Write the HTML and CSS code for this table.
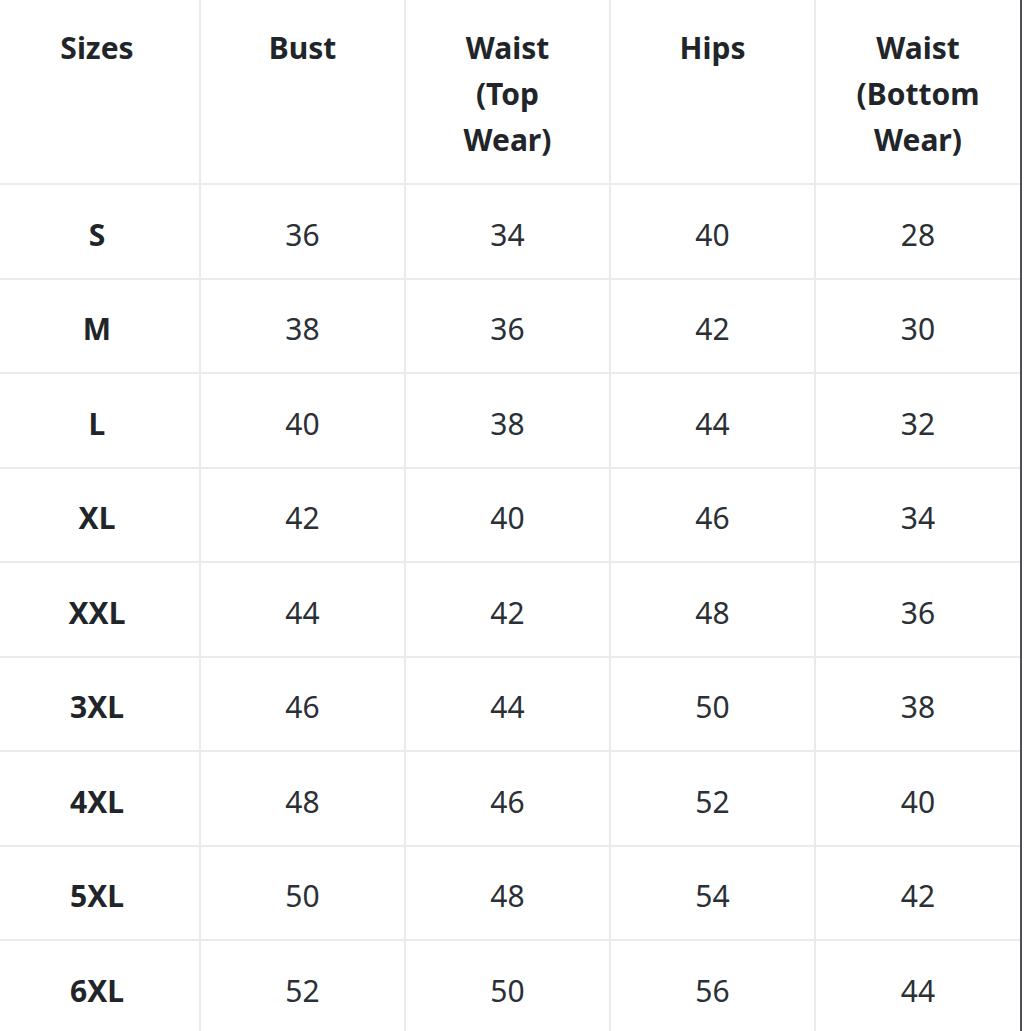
FILE: index.html
```html
<!DOCTYPE html>
<html lang="en">
<head>
<meta charset="utf-8">
<title>Size Chart</title>
<link rel="stylesheet" href="styles.css">
</head>
<body>
<div class="chart">
  <table class="size-table">
    <colgroup>
      <col class="c"><col class="c"><col class="c"><col class="c"><col class="c">
    </colgroup>
    <thead>
      <tr>
        <th>Sizes</th>
        <th>Bust</th>
        <th>Waist (Top Wear)</th>
        <th>Hips</th>
        <th>Waist (Bottom Wear)</th>
      </tr>
    </thead>
    <tbody>
      <tr><th>S</th><td>36</td><td>34</td><td>40</td><td>28</td></tr>
      <tr><th>M</th><td>38</td><td>36</td><td>42</td><td>30</td></tr>
      <tr><th>L</th><td>40</td><td>38</td><td>44</td><td>32</td></tr>
      <tr><th>XL</th><td>42</td><td>40</td><td>46</td><td>34</td></tr>
      <tr><th>XXL</th><td>44</td><td>42</td><td>48</td><td>36</td></tr>
      <tr><th>3XL</th><td>46</td><td>44</td><td>50</td><td>38</td></tr>
      <tr><th>4XL</th><td>48</td><td>46</td><td>52</td><td>40</td></tr>
      <tr><th>5XL</th><td>50</td><td>48</td><td>54</td><td>42</td></tr>
      <tr><th>6XL</th><td>52</td><td>50</td><td>56</td><td>44</td></tr>
    </tbody>
  </table>
</div>
</body>
</html>
```
FILE: styles.css
```css
html, body {
  margin: 0;
  padding: 0;
  background: #ffffff;
}

.chart {
  width: 1020px;
  height: 1031px;
  overflow: hidden;
  border-right: 2px solid #4b5058;
  background: #ffffff;
}

.size-table {
  margin-left: -5px;
  width: 1025px;
  table-layout: fixed;
  border-collapse: collapse;
  font-family: "Noto Sans", "Open Sans", "Liberation Sans", sans-serif;
  font-size: 30px;
  line-height: 46px;
  color: #212529;
}

.size-table .c {
  width: 205px;
}

.size-table th,
.size-table td {
  border: 2px solid #ebebeb;
  text-align: center;
  padding: 0 26px;
}

.size-table thead th {
  border-top: none;
  height: 184px;
  box-sizing: border-box;
  padding-top: 25px;
  padding-bottom: 19px;
  vertical-align: top;
  font-weight: 700;
}

.size-table tbody th,
.size-table tbody td {
  height: 94.5px;
  box-sizing: border-box;
  padding-top: 7px;
  padding-bottom: 0;
  vertical-align: middle;
}

.size-table tbody th {
  font-weight: 700;
}

.size-table td {
  font-weight: 400;
  color: #2b3036;
}

.size-table th:first-child,
.size-table td:first-child {
  border-left: none;
}

.size-table th:last-child,
.size-table td:last-child {
  border-right: none;
}
```
